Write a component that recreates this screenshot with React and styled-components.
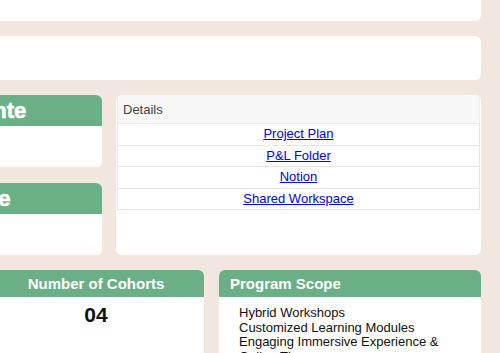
import React from "react";
import styled, { createGlobalStyle } from "styled-components";

const links = ["Project Plan", "P&L Folder", "Notion", "Shared Workspace"];
const scope = [
  "Hybrid Workshops",
  "Customized Learning Modules",
  "Engaging Immersive Experience &",
  "Online Theory",
];

const App = () => {
  return (
    <>
      <GlobalStyle />
      <Page>
        <Panel height="80px" />
        <Panel height="44px" />

        <MiddleRow>
          <SideColumn>
            <StatCard>
              <StatHeader>Cliente</StatHeader>
              <StatBody />
            </StatCard>
            <StatCard>
              <StatHeader>Mode</StatHeader>
              <StatBody />
            </StatCard>
          </SideColumn>

          <DetailsCard>
            <DetailsHeader>Details</DetailsHeader>
            {links.map((label) => (
              <LinkRow key={label}>
                <a href="#">{label}</a>
              </LinkRow>
            ))}
          </DetailsCard>
        </MiddleRow>

        <BottomRow>
          <InfoCard>
            <InfoHeader>Budget</InfoHeader>
          </InfoCard>
          <InfoCard>
            <InfoHeader>Number of Cohorts</InfoHeader>
            <BigNumber>04</BigNumber>
          </InfoCard>
          <InfoCard>
            <InfoHeader align="left">Program Scope</InfoHeader>
            <ScopeList>
              {scope.map((item) => (
                <li key={item}>{item}</li>
              ))}
            </ScopeList>
          </InfoCard>
        </BottomRow>
      </Page>
    </>
  );
};

const GlobalStyle = createGlobalStyle`
  html, body {
    margin: 0;
    background: #f1e7de;
    overflow: hidden;
    font-family: "Liberation Sans", Arial, sans-serif;
  }
`;

// the dashboard is wider and taller than the window, only its right part shows
const Page = styled.div`
  display: flex;
  flex-direction: column;
  gap: 15px;
  width: 598px;
  margin-top: -59px;
  margin-left: -117px;
`;

const Panel = styled.div`
  height: ${(p) => p.height};
  background: #ffffff;
  border-radius: 6px;
`;

const MiddleRow = styled.div`
  display: grid;
  grid-template-columns: 219px 365px;
  gap: 14px;
`;

const SideColumn = styled.div`
  display: flex;
  flex-direction: column;
  gap: 16px;
`;

const StatCard = styled.div`
  display: flex;
  flex-direction: column;
  border-radius: 6px;
  overflow: hidden;
  background: #ffffff;
`;

const StatHeader = styled.div`
  height: 31px;
  line-height: 31px;
  padding-left: 70px;
  background: #6aaf86;
  color: #ffffff;
  font-size: 22px;
  font-weight: 900;
  -webkit-text-stroke: 0.6px #ffffff;
`;

const StatBody = styled.div`
  height: 41px;
`;

const DetailsCard = styled.div`
  height: 160px;
  box-sizing: border-box;
  background: #ffffff;
  border-radius: 6px;
  padding: 0 1px;
  overflow: hidden;
  font-size: 13px;
`;

const DetailsHeader = styled.div`
  height: 29px;
  line-height: 29px;
  padding-left: 5px;
  background: #f7f7f7;
  color: #444444;
  border: 1px solid #ebebeb;
  border-top: none;
  box-sizing: border-box;
`;

const LinkRow = styled.div`
  height: 21.5px;
  box-sizing: border-box;
  line-height: 20px;
  text-align: center;
  border: 1px solid #e6e6e6;
  border-top: none;

  a {
    color: #0000ee;
    text-decoration: underline;
  }
`;

const BottomRow = styled.div`
  display: grid;
  grid-template-columns: 90px 216px 262px;
  gap: 15px;
`;

const InfoCard = styled.div`
  height: 120px;
  background: #ffffff;
  border-radius: 6px;
  overflow: hidden;
`;

const InfoHeader = styled.div`
  height: 27px;
  line-height: 27px;
  padding: 0 11px;
  background: #6aaf86;
  color: #ffffff;
  font-size: 15px;
  font-weight: 700;
  text-align: ${(p) => p.align || "center"};
`;

const BigNumber = styled.div`
  margin-top: 6px;
  text-align: center;
  font-size: 21px;
  font-weight: 700;
  color: #111111;
`;

const ScopeList = styled.ul`
  list-style: none;
  margin: 0;
  padding: 9px 0 0 20px;
  font-size: 13px;
  line-height: 14.5px;
  color: #111111;
`;

export default App;
